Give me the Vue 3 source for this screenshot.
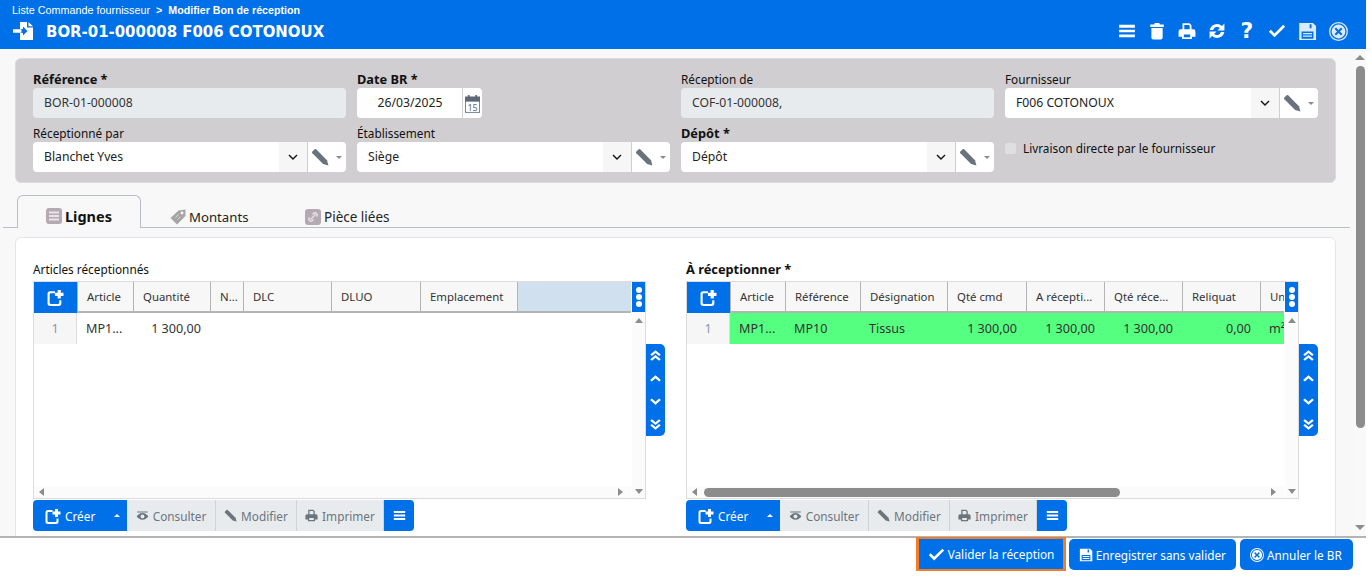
<script setup>
import { h } from 'vue'

const paths = {
  bars: 'M1 2.5h14V5H1zM1 6.8h14v2.4H1zM1 11h14v2.5H1z',
  trash: 'M6 .8h4l.5 1.4H14v2.2H2V2.2h3.5zM3 5.4h10v8.4a1.7 1.7 0 0 1-1.7 1.7H4.7A1.7 1.7 0 0 1 3 13.8z',
  print: 'M4 1h6.2L12 2.8V6.5h-1.6V3.4L9.6 2.6H5.6v3.9H4zM2.6 6.5h10.8A2 2 0 0 1 15.5 8.6V13H12.4v2H3.6v-2H.5V8.6A2 2 0 0 1 2.6 6.5zM5.2 11v2.5h5.6V11z',
  refresh: 'M14.6 1.4v6.2H8.4l2.2-2.2A3.6 3.6 0 0 0 4.6 7.2H1.5A6.6 6.6 0 0 1 12.4 3.6zM1.4 14.6V8.4h6.2l-2.2 2.2A3.6 3.6 0 0 0 11.4 8.8h3.1A6.6 6.6 0 0 1 3.6 12.4z',
  check: 'M.8 8.6l1.7-1.7 3.3 3.3 7.7-7.7 1.7 1.7-9.4 9.4z',
  save: 'M1 .8h11.6L15.2 3.4V15.2H1zM9.8 1.8v3.4h1.6V1.8zM3 8v6h10V8zM4.2 9.2h7.6v1.1H4.2zM4.2 11.4h7.6v1.1H4.2z',
  close: 'M8 0a8 8 0 1 1 0 16A8 8 0 0 1 8 0zM8 1.1a6.9 6.9 0 1 0 0 13.8A6.9 6.9 0 0 0 8 1.1zM8 2.2a5.8 5.8 0 1 1 0 11.6A5.8 5.8 0 0 1 8 2.2zM5.9 4.7L4.7 5.9 6.8 8l-2.1 2.1 1.2 1.2L8 9.2l2.1 2.1 1.2-1.2L9.2 8l2.1-2.1-1.2-1.2L8 6.8z',
  pencil: 'M15.5 15.5l-4.7-1.3L1.2 4.6a1 1 0 0 1 0-1.4l2-2a1 1 0 0 1 1.4 0l9.6 9.6z',
  plus: 'M3 2h4.5v2H3.5a1 1 0 0 0-1 1v8a1 1 0 0 0 1 1h7a1 1 0 0 0 1-1v-2.5h2v3a2.5 2.5 0 0 1-2.5 2.5H3A2.5 2.5 0 0 1 .5 13.5v-9A2.5 2.5 0 0 1 3 2zM10 1h3v2.5h2.5v3H13V9h-3V6.5H7.5v-3H10z',
  eye: 'M1.5 3.2L14.5 3.2 14.5 4.4 1.5 4.4zM8 5C4.6 5 2 7.6.8 9.2 2 10.8 4.6 13.2 8 13.2s6-2.4 7.2-4C14 7.6 11.4 5 8 5zM8 6.7a2.4 2.4 0 1 1 0 4.8 2.4 2.4 0 0 1 0-4.8z',
  up2: 'M8 1.6l6.4 5.2-2 1.8L8 5 3.6 8.6l-2-1.8zM8 7.4l6.4 5.2-2 1.8L8 10.8l-4.4 3.6-2-1.8z',
  up: 'M8 4l6.6 5.8-2.1 1.9L8 7.8l-4.5 3.9-2.1-1.9z',
  down: 'M8 12L1.4 6.2l2.1-1.9L8 8.2l4.5-3.9 2.1 1.9z',
  down2: 'M8 8.6L1.6 3.4l2-1.8L8 5.2l4.4-3.6 2 1.8zM8 14.4l-6.4-5.2 2-1.8L8 11l4.4-3.6 2 1.8z'
}

const Icon = (props) =>
  h('svg', { class: 'icon', viewBox: '0 0 16 16', 'aria-hidden': 'true' }, [
    h('path', { d: paths[props.name], fill: 'currentColor', 'fill-rule': 'evenodd' })
  ])
Icon.props = ['name']

const topIcons = ['bars', 'trash', 'print', 'refresh', 'help', 'check', 'save', 'close']

const row1 = [
  { label: 'Référence *', strong: true, value: 'BOR-01-000008', type: 'readonly' },
  { label: 'Date BR *', strong: true, value: '26/03/2025', type: 'date' },
  { label: 'Réception de', value: 'COF-01-000008,', type: 'readonly' },
  { label: 'Fournisseur', value: 'F006 COTONOUX', type: 'select' }
]
const row2 = [
  { label: 'Réceptionné par', value: 'Blanchet Yves', type: 'select' },
  { label: 'Établissement', value: 'Siège', type: 'select' },
  { label: 'Dépôt *', strong: true, value: 'Dépôt', type: 'select' }
]

const leftCols = [
  { name: 'Article', w: 56 }, { name: 'Quantité', w: 77 }, { name: 'N...', w: 33 },
  { name: 'DLC', w: 88 }, { name: 'DLUO', w: 89 }, { name: 'Emplacement', w: 97 }
]
const rightCols = [
  { name: 'Article', w: 55 }, { name: 'Référence', w: 75 }, { name: 'Désignation', w: 87 },
  { name: 'Qté cmd', w: 79 }, { name: 'A récepti...', w: 78 }, { name: 'Qté réce...', w: 78 },
  { name: 'Reliquat', w: 78 }, { name: 'Un', w: 24 }
]
const leftRow = [
  { t: 'MP1...', w: 56 }, { t: '1 300,00', w: 77, num: true }
]
const rightRow = [
  { t: 'MP1...', w: 55 }, { t: 'MP10', w: 75 }, { t: 'Tissus', w: 87 },
  { t: '1 300,00', w: 79, num: true }, { t: '1 300,00', w: 78, num: true },
  { t: '1 300,00', w: 78, num: true }, { t: '0,00', w: 78, num: true }, { t: 'm²', w: 24 }
]
const panes = [
  { title: 'Articles réceptionnés', strong: false, cols: leftCols, row: leftRow, green: false, filler: true, hthumb: false },
  { title: 'À réceptionner *', strong: true, cols: rightCols, row: rightRow, green: true, filler: false, hthumb: true }
]
const nav = ['up2', 'up', 'down', 'down2']
</script>

<template>
  <div class="page">
    <header class="topbar">
      <div class="crumb">
        <span class="crumb-first">Liste Commande fournisseur</span>
        <span class="sep">&gt;</span>
        <span>Modifier Bon de réception</span>
      </div>
      <div class="title-row">
        <svg class="doc-icon" viewBox="0 0 20 18" aria-hidden="true">
          <path fill="#fff" fill-rule="evenodd" d="M7 0h7v5.5h6V18H7v-7h3v2.5L14.5 9 10 4.5V7H7zM15.5 0L20 4.2h-4.5zM0 7.2h8.5v3.6H0z" />
        </svg>
        <h1>BOR-01-000008 F006 COTONOUX</h1>
        <div class="top-actions">
          <template v-for="name in topIcons" :key="name">
            <span v-if="name === 'help'" class="help">?</span>
            <Icon v-else :name="name" :class="'top-' + name" />
          </template>
        </div>
      </div>
    </header>

    <div class="main">
      <div class="content">
        <section class="form-panel">
          <div v-for="f in [...row1, ...row2]" :key="f.label" class="field">
            <label :class="{ strong: f.strong }">{{ f.label }}</label>
            <div v-if="f.type === 'readonly'" class="input readonly">{{ f.value }}</div>
            <div v-else-if="f.type === 'date'" class="date-group">
              <div class="input date">{{ f.value }}</div>
              <div class="cal">
                <svg viewBox="0 0 16 20" aria-hidden="true">
                  <rect x=".5" y="3" width="15" height="16.5" fill="#fff" stroke="#6f7f95" />
                  <rect x="0" y="3" width="16" height="5" fill="#5d6775" />
                  <rect x="3" y="1" width="2" height="4" fill="#5d6775" />
                  <rect x="11" y="1" width="2" height="4" fill="#5d6775" />
                  <text x="8" y="17.5" text-anchor="middle" font-size="9.5" fill="#5d6775">15</text>
                </svg>
              </div>
            </div>
            <div v-else class="select-group">
              <div class="input grow">{{ f.value }}</div>
              <div class="chev"><svg viewBox="0 0 10 6"><path d="M1 1l4 4 4-4" fill="none" stroke="#111" stroke-width="1.4" /></svg></div>
              <div class="edit">
                <Icon name="pencil" class="pencil" />
                <i class="caret"></i>
              </div>
            </div>
          </div>
          <div class="field check-field">
            <span class="checkbox"></span>
            <span>Livraison directe par le fournisseur</span>
          </div>
        </section>

        <nav class="tabs">
          <a class="tab active">
            <span class="tab-ico">
              <svg viewBox="0 0 16 16"><rect width="16" height="16" rx="3" fill="#b6aab2" /><path d="M3 3.5h10v2H3zM3 7h10v2H3zM3 10.5h10v2H3z" fill="#e8e4e6" /></svg>
            </span>
            Lignes
          </a>
          <a class="tab">
            <span class="tab-ico">
              <svg viewBox="0 0 16 16"><path d="M8.5 1.5L15.5 .5 15.5 7 7 15.5 .5 9z" fill="#a8a4a6" /><circle cx="12" cy="4" r="1.4" fill="#f8f8f8" /><path d="M5.5 8.5L8.5 5.5M7.5 10.5l3-3" stroke="#d8d6d7" stroke-width="1" /></svg>
            </span>
            Montants
          </a>
          <a class="tab">
            <span class="tab-ico">
              <svg viewBox="0 0 16 16"><rect width="16" height="16" rx="3" fill="#b6aab2" /><path d="M5.5 10.5l5-5M4.5 8.5a2 2 0 0 0 3 3l1-1M11.5 7.5a2 2 0 0 0-3-3l-1 1" fill="none" stroke="#e8e4e6" stroke-width="1.3" /></svg>
            </span>
            Pièce liées
          </a>
        </nav>

        <section class="card">
          <div v-for="p in panes" :key="p.title" class="pane">
            <div class="pane-title" :class="{ strong: p.strong }">{{ p.title }}</div>
            <div class="pane-body">
              <div class="grid">
                <div class="grid-main">
                  <div class="grid-head">
                    <div class="add-cell"><Icon name="plus" class="add-ico" /></div>
                    <div v-for="c in p.cols" :key="c.name" class="hcell" :style="{ width: c.w + 'px' }">{{ c.name }}</div>
                    <div v-if="p.filler" class="filler"></div>
                  </div>
                  <div class="grid-row">
                    <div class="rownum">1</div>
                    <div class="cells" :class="{ green: p.green }">
                      <div v-for="(c, i) in p.row" :key="i" class="cell" :class="{ num: c.num }" :style="{ width: c.w + 'px' }">{{ c.t }}</div>
                    </div>
                  </div>
                  <div class="spacer"></div>
                  <div class="hscroll">
                    <i class="arrow-left"></i>
                    <div class="htrack"><div v-if="p.hthumb" class="hthumb"></div></div>
                    <i class="arrow-right"></i>
                  </div>
                </div>
                <div class="grid-side">
                  <div class="dots"><i></i><i></i><i></i></div>
                  <i class="arrow-up"></i>
                  <div class="spacer"></div>
                  <i class="arrow-down"></i>
                </div>
              </div>
              <div class="nav-col">
                <span v-for="n in nav" :key="n" class="nav-btn"><Icon :name="n" /></span>
              </div>
            </div>
            <div class="toolbar">
              <button class="tb blue create"><Icon name="plus" class="tb-plus" />Créer<i class="caret up"></i></button>
              <button class="tb grey w89"><Icon name="eye" class="tb-ico" />Consulter</button>
              <button class="tb grey w81"><Icon name="pencil" class="tb-ico" />Modifier</button>
              <button class="tb grey w87"><Icon name="print" class="tb-ico" />Imprimer</button>
              <button class="tb blue menu"><Icon name="bars" /></button>
            </div>
          </div>
        </section>
      </div>

      <div class="vscroll">
        <i class="arrow-up big"></i>
        <div class="vthumb"></div>
        <div class="spacer"></div>
        <i class="arrow-down big"></i>
      </div>
    </div>

    <footer class="footer">
      <button class="fbtn focus"><Icon name="check" class="f-check" />Valider la réception</button>
      <button class="fbtn"><Icon name="save" />Enregistrer sans valider</button>
      <button class="fbtn cancel"><Icon name="close" />Annuler le BR</button>
    </footer>
  </div>
</template>

<style>
html, body { margin: 0; background: #fff; }
</style>

<style scoped>
.page {
  width: 1366px;
  height: 582px;
  display: flex;
  flex-direction: column;
  overflow: hidden;
  font-family: "Noto Sans", "Liberation Sans", sans-serif;
  font-size: 11.8px;
  color: #212529;
}
.icon { display: block; width: 16px; height: 16px; flex: none; }
.spacer { flex: 1; }
.strong { font-weight: 700; color: #111; font-size: 12.8px; }

.topbar {
  height: 49px;
  flex: none;
  box-sizing: border-box;
  background: #0070e8;
  color: #fff;
  padding: 4px 18px 0 12px;
}
.crumb {
  display: flex;
  gap: 6px;
  font: 700 10.7px/13px "Liberation Sans", sans-serif;
}
.crumb-first { font-weight: 400; font-size: 10.8px; }
.title-row { display: flex; align-items: center; height: 28px; }
.doc-icon { width: 20px; height: 18px; margin: 0 13px 0 1px; }
h1 {
  margin: 1px 0 0;
  font: 700 16.6px/20px "DejaVu Sans Condensed", "DejaVu Sans", sans-serif;
  font-stretch: condensed;
}
.top-actions {
  margin-left: auto;
  display: flex;
  align-items: center;
  gap: 12px;
}
.top-actions .icon { width: 18px; height: 18px; }
.help { width: 18px; text-align: center; font: 700 22px/18px "DejaVu Sans", sans-serif; }
.top-save, .top-close { color: #dcebfb; }
.top-save { width: 19px !important; height: 19px !important; }
.top-close { width: 19px !important; height: 19px !important; }

.main { flex: 1; display: flex; min-height: 0; background: #f8f8f8; }
.content { width: 1354px; flex: none; overflow: hidden; }

.form-panel {
  margin: 9px 18px 0 15px;
  height: 125px;
  box-sizing: border-box;
  padding: 11px 17px 0;
  background: #d0ced1;
  border: 1px solid #dcdbdd;
  border-radius: 6px;
  display: grid;
  grid-template-columns: repeat(4, 313px);
  column-gap: 11px;
  row-gap: 6px;
  align-content: start;
}
.field label { display: block; height: 18px; line-height: 18px; color: #111; }
.input {
  height: 30px;
  box-sizing: border-box;
  padding: 0 11px;
  line-height: 30px;
  font-size: 12.2px;
  background: #fff;
  color: #222;
  border-radius: 4px;
}
.readonly { background: #e8ebee; color: #333; }
.select-group, .date-group { display: flex; height: 30px; }
.date-group { width: 125px; }
.grow { flex: 1; border-radius: 4px 0 0 4px; }
.date { flex: 1; text-align: center; padding: 0 0 0 1px; border-radius: 4px 0 0 4px; }
.cal {
  width: 19px;
  margin-left: 1px;
  display: flex;
  align-items: center;
  justify-content: center;
  background: #fff;
  border-radius: 0 4px 4px 0;
}
.cal svg { width: 15px; height: 21px; }
.chev {
  width: 28px;
  display: flex;
  align-items: center;
  justify-content: center;
  background: #f6f6f6;
}
.chev svg { width: 10px; height: 6px; }
.edit {
  width: 38px;
  margin-left: 1px;
  display: flex;
  align-items: center;
  gap: 7px;
  padding-left: 3px;
  box-sizing: border-box;
  background: #fff;
  border-radius: 0 4px 4px 0;
}
.pencil { width: 18px; height: 18px; color: #69727d; }
.caret {
  display: block;
  width: 0;
  height: 0;
  border-left: 3px solid transparent;
  border-right: 3px solid transparent;
  border-top: 3px solid #8b8b8b;
}
.caret.up { border-top: 0; border-bottom: 3px solid #fff; margin-left: 15px; }
.check-field {
  display: flex;
  align-items: center;
  gap: 7px;
  height: 18px;
  margin-top: 15px;
  color: #111;
}
.checkbox { width: 11px; height: 11px; background: #dfdfe1; border-radius: 2px; }

.tabs {
  margin: 12px 4px 0 3px;
  height: 33px;
  box-sizing: border-box;
  border-bottom: 1px solid #b9bec4;
  display: flex;
  padding-left: 14px;
}
.tab {
  height: 32px;
  box-sizing: border-box;
  display: flex;
  align-items: center;
  justify-content: center;
  gap: 3px;
  font-size: 13.5px;
  color: #222;
  padding-top: 11px;
}
.tab:nth-child(1) { width: 124px; }
.tab:nth-child(2) { width: 136px; font-size: 13.2px; justify-content: flex-start; padding-left: 29px; }
.tab:nth-child(3) { width: 120px; justify-content: flex-start; padding-left: 28px; }
.tab.active {
  height: 33px;
  padding-top: 8px;
  background: #f8f8f8;
  border: 1px solid #b9bec4;
  border-bottom: 0;
  border-radius: 6px 6px 0 0;
  font-weight: 700;
  font-size: 14.5px;
  color: #111;
}
.tab-ico { width: 16px; height: 16px; display: block; }
.tab-ico svg { display: block; width: 16px; height: 16px; }

.card {
  margin: 9px 18px 0 15px;
  height: 320px;
  box-sizing: border-box;
  background: #fff;
  border: 1px solid #e4e5ea;
  border-radius: 6px;
  padding: 22px 17px 0;
  display: grid;
  grid-template-columns: 632px 632px;
  column-gap: 21px;
}
.pane-title { height: 21px; line-height: 18px; color: #111; }
.pane-body { display: flex; align-items: flex-start; }
.grid {
  width: 613px;
  height: 218px;
  flex: none;
  box-sizing: border-box;
  border: 1px solid #dcdcdf;
  display: flex;
}
.grid-main { width: 597px; display: flex; flex-direction: column; overflow: hidden; flex: none; }
.grid-head {
  height: 31px;
  display: flex;
  flex: none;
  background: #f7f7f7;
  border-bottom: 2px solid #b4b4b4;
  box-sizing: border-box;
}
.add-cell {
  width: 43px;
  flex: none;
  height: 31px;
  background: #0070e8;
  color: #fff;
  display: flex;
  align-items: center;
  justify-content: center;
}
.add-ico { width: 17px; height: 17px; }
.hcell {
  flex: none;
  box-sizing: border-box;
  padding-left: 9px;
  line-height: 30px;
  font-size: 11.4px;
  color: #333;
  border-left: 1px solid #b4b4b4;
  white-space: nowrap;
  overflow: hidden;
}
.filler { flex: 1; height: 29px; background: #d0e0ee; border-left: 1px solid #b4b4b4; }
.grid-row { display: flex; height: 31px; flex: none; font-size: 12.6px; }
.rownum {
  width: 43px;
  flex: none;
  text-align: center;
  line-height: 31px;
  background: #f6f6f6;
  color: #8a97a8;
  border-right: 1px solid #dcdcdf;
  box-sizing: border-box;
}
.cells { display: flex; flex: 1; }
.cells.green { background: #55ff80; }
.cell {
  flex: none;
  box-sizing: border-box;
  padding: 0 9px;
  line-height: 31px;
  color: #333;
  white-space: nowrap;
  overflow: hidden;
}
.cell.num { text-align: right; }
.hscroll { height: 12px; flex: none; display: flex; align-items: center; background: #fbfbfb; padding: 0 8px 0 5px; gap: 7px; }
.htrack { flex: 1; height: 9px; }
.hthumb { width: 416px; height: 9px; border-radius: 5px; background: #8c8c8c; }
.grid-side {
  width: 13px;
  flex: none;
  margin-left: 1px;
  display: flex;
  flex-direction: column;
  align-items: center;
  background: #fbfbfb;
  padding-bottom: 4px;
}
.dots {
  width: 13px;
  height: 30px;
  background: #0070e8;
  display: flex;
  flex-direction: column;
  align-items: center;
  justify-content: center;
  gap: 1px;
  margin-bottom: 6px;
}
.dots i { width: 6px; height: 6px; border-radius: 50%; background: #fff; }
.arrow-up, .arrow-down, .arrow-left, .arrow-right { display: block; width: 0; height: 0; flex: none; border: 0 solid transparent; }
.arrow-up { border-width: 0 4px 5px; border-bottom-color: #8c8c8c; }
.arrow-down { border-width: 5px 4px 0; border-top-color: #8c8c8c; }
.arrow-left { border-width: 4px 5px 4px 0; border-right-color: #8c8c8c; }
.arrow-right { border-width: 4px 0 4px 5px; border-left-color: #8c8c8c; }
.big { border-left-width: 5px; border-right-width: 5px; }
.nav-col {
  width: 19px;
  margin-top: 63px;
  background: #0070e8;
  color: #fff;
  border-radius: 0 5px 5px 0;
  display: flex;
  flex-direction: column;
}
.nav-btn { height: 23px; display: flex; align-items: center; justify-content: center; }
.nav-btn .icon { width: 13px; height: 13px; }

.toolbar { display: flex; margin-top: 1px; height: 31px; }
.tb {
  height: 31px;
  box-sizing: border-box;
  font: inherit;
  border: 0;
  padding: 0;
  display: flex;
  align-items: center;
  justify-content: center;
  gap: 4px;
}
.tb.blue { background: #0070e8; color: #fff; }
.tb.grey { background: #e8ebee; color: #6c757d; border-right: 1px solid #d0d3d7; }
.create { width: 94px; border-radius: 4px 0 0 4px; justify-content: flex-start !important; padding-left: 12px !important; }
.create .tb-plus { width: 16px; height: 16px; }
.w89 { width: 89px; }
.w81 { width: 81px; }
.w87 { width: 87px; }
.tb-ico { width: 13px; height: 13px; }
.menu { width: 30px; border-radius: 0 4px 4px 0; }
.menu .icon { width: 13px; height: 13px; }

.vscroll {
  width: 12px;
  flex: none;
  display: flex;
  flex-direction: column;
  align-items: center;
  background: #f9f9f9;
  padding: 6px 0 6px;
  box-sizing: border-box;
}
.vthumb { width: 9px; height: 362px; margin-top: 6px; border-radius: 5px; background: #8c8c8c; }

.footer {
  height: 46px;
  flex: none;
  box-sizing: border-box;
  border-top: 2px solid #b4b4b4;
  background: #fff;
  display: flex;
  align-items: flex-start;
  justify-content: flex-end;
  gap: 4px;
  padding: 1px 13px 0 0;
}
.fbtn {
  height: 31px;
  box-sizing: border-box;
  border: 0;
  border-radius: 5px;
  background: #0070e8;
  color: #fff;
  font: inherit;
  white-space: nowrap;
  display: flex;
  align-items: center;
  gap: 3px;
  padding: 0 10px;
}
.fbtn .icon { width: 14px; height: 14px; }
.fbtn.cancel { width: 113px; }
.fbtn.focus {
  height: 34px;
  margin: -2px -1px 0 0;
  border-radius: 0;
  border: solid #f77b22;
  border-width: 2px 3px;
  padding: 0 0 0 9px;
  width: 150px;
}
.fbtn .f-check { width: 17px; height: 17px; }
</style>
